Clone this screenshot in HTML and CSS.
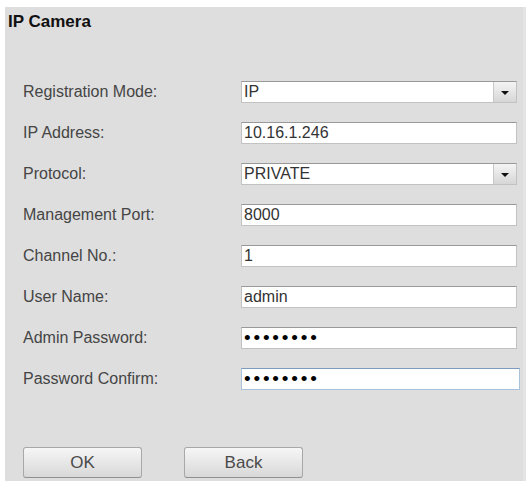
FILE: index.html
```html
<!DOCTYPE html>
<html lang="en">
<head>
	<meta charset="UTF-8">
	<title>IP Camera</title>
	<link rel="stylesheet" href="styles.css">
</head>
<body>
	<div class="panel">
		<h1 class="panel-title">IP Camera</h1>

		<form class="camera-form">
			<label class="field-label">Registration Mode:</label>
			<div class="fake-select">
				<span class="fake-select-value">IP</span>
				<span class="fake-select-arrow"></span>
			</div>

			<label class="field-label">IP Address:</label>
			<input class="text-field" type="text" value="10.16.1.246">

			<label class="field-label">Protocol:</label>
			<div class="fake-select">
				<span class="fake-select-value">PRIVATE</span>
				<span class="fake-select-arrow"></span>
			</div>

			<label class="field-label">Management Port:</label>
			<input class="text-field" type="text" value="8000">

			<label class="field-label">Channel No.:</label>
			<input class="text-field" type="text" value="1">

			<label class="field-label">User Name:</label>
			<input class="text-field" type="text" value="admin">

			<label class="field-label">Admin Password:</label>
			<input class="text-field password" type="password" value="12345678">

			<label class="field-label">Password Confirm:</label>
			<input class="text-field password focused" type="password" value="12345678">
		</form>

		<div class="form-actions">
			<button class="action-btn" type="button">OK</button>
			<button class="action-btn" type="button">Back</button>
		</div>
	</div>
</body>
</html>
```

FILE: styles.css
```css
/* Base */
:root {
	--panel-bg: #dedede;
	--field-border: #c2c2c2;
	--field-border-top: #999999;
	--text-color: #454545;
}

html, body {
	margin: 0;
	height: 100%;
	background: #ffffff;
}

body {
	font-family: "Liberation Sans", Arial, sans-serif;
	color: var(--text-color);
}

/* Panel */
.panel {
	box-sizing: border-box;
	margin: 7px 0 0 5px;
	height: calc(100% - 7px);
	padding: 4px 6px 0 3px;
	background: var(--panel-bg);
	border-right: 3px solid #e4e4e4;
}

.panel-title {
	margin: 0;
	font-size: 17px;
	line-height: 22px;
	font-weight: bold;
	color: #111;
}

/* Form grid */
.camera-form {
	display: grid;
	grid-template-columns: 218px 276px;
	grid-auto-rows: 22px;
	row-gap: 19px;
	margin: 48px 0 0 15px;
	align-items: center;
}

.field-label {
	font-size: 16px;
	color: var(--text-color);
}

.text-field,
.fake-select {
	box-sizing: border-box;
	height: 22px;
	width: 276px;
	margin: 0;
	border: 1px solid var(--field-border);
	border-top-color: var(--field-border-top);
	background: #fff;
	font-family: "Liberation Sans", Arial, sans-serif;
	font-size: 16px;
	color: #333;
}

.text-field {
	padding: 0 2px;
	outline: none;
}

.text-field.password {
	font-size: 19px;
	letter-spacing: 2.8px;
	color: #000;
}

.text-field.focused {
	width: 279px;
	border-color: #a9c2dc;
	border-top-color: #7d9bbd;
}

/* Select look-alike */
.fake-select {
	display: flex;
	align-items: stretch;
}

.fake-select-value {
	flex: 1;
	padding-left: 2px;
	line-height: 20px;
}

.fake-select-arrow {
	position: relative;
	width: 22px;
	border-left: 1px solid #c8c8c8;
	background: linear-gradient(#f4f4f4, #d6d6d6);
}

.fake-select-arrow::after {
	content: "";
	position: absolute;
	left: 7px;
	top: 9px;
	border-left: 4px solid transparent;
	border-right: 4px solid transparent;
	border-top: 4px solid #111;
}

/* Buttons */
.form-actions {
	display: flex;
	gap: 42px;
	margin: 57px 0 0 15px;
}

.action-btn {
	width: 119px;
	height: 31px;
	border: 1px solid #a8a8a8;
	border-bottom-color: #909090;
	border-radius: 3px;
	background: linear-gradient(#f6f6f6, #d8d8d8);
	font-family: "Liberation Sans", Arial, sans-serif;
	font-size: 17px;
	color: #4a4a4a;
	cursor: pointer;
}
```
